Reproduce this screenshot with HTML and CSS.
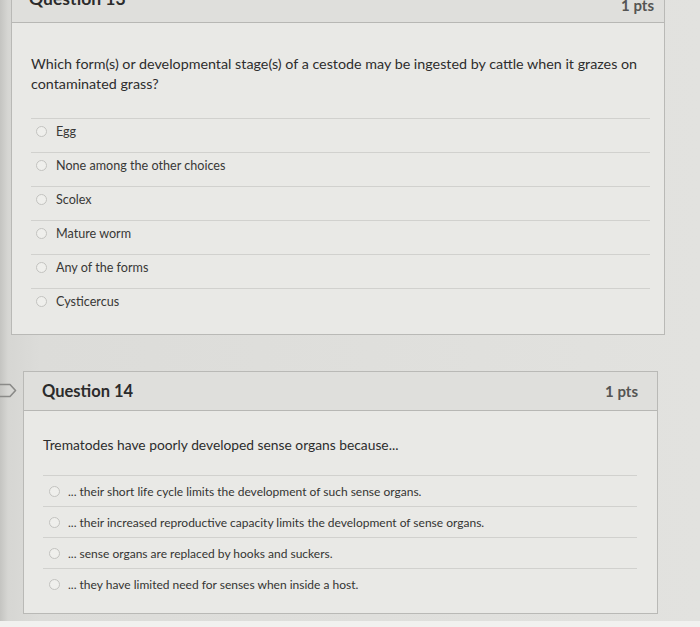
FILE: index.html
```html
<!DOCTYPE html>
<html lang="en">
<head>
<meta charset="utf-8">
<title>Quiz</title>
<link rel="stylesheet" href="styles.css">
</head>
<body>
<div class="screen">
  <div class="glare"></div>
  <svg class="cursor" width="10" height="14" viewBox="0 0 10 14"><path d="M1 1 L1 11 L3.6 8.6 L5.6 13 L7.2 12.3 L5.2 8 L8.6 8 Z" fill="#1a1a1a" stroke="#555" stroke-width="0.5"/></svg>
  <section class="q q13">
    <header class="q-head">
      <h2 class="q-name">Question 13</h2>
      <span class="pts">1 pts</span>
    </header>
    <div class="q-body">
      <p class="q-text">Which form(s) or developmental stage(s) of a cestode may be ingested by cattle when it grazes on contaminated grass?</p>
      <ul class="answers">
        <li><span class="radio"></span>Egg</li>
        <li><span class="radio"></span>None among the other choices</li>
        <li><span class="radio"></span>Scolex</li>
        <li><span class="radio"></span>Mature worm</li>
        <li><span class="radio"></span>Any of the forms</li>
        <li><span class="radio"></span>Cysticercus</li>
      </ul>
    </div>
  </section>
  <section class="q q14">
    <svg class="flag" width="18" height="16" viewBox="0 0 18 16"><path d="M-2 1.5 H10 L15.5 7.5 L10 13.5 H-2" fill="none" stroke="#8a8a88" stroke-width="1.6" stroke-linejoin="round"/></svg>
    <header class="q-head">
      <h2 class="q-name">Question 14</h2>
      <span class="pts">1 pts</span>
    </header>
    <div class="q-body">
      <p class="q-text">Trematodes have poorly developed sense organs because...</p>
      <ul class="answers">
        <li><span class="radio"></span>... their short life cycle limits the development of such sense organs.</li>
        <li><span class="radio"></span>... their increased reproductive capacity limits the development of sense organs.</li>
        <li><span class="radio"></span>... sense organs are replaced by hooks and suckers.</li>
        <li><span class="radio"></span>... they have limited need for senses when inside a host.</li>
      </ul>
    </div>
  </section>
  <div class="bottom-strip"></div>
</div>
</body>
</html>
```
FILE: styles.css
```css
* { box-sizing: border-box; }
html, body { margin: 0; padding: 0; }
body {
  background: #dadad7;
  font-family: Lato, "Open Sans", "Liberation Sans", sans-serif;
  color: #2f2f2f;
}
.screen {
  position: relative;
  width: 700px;
  height: 627px;
  overflow: hidden;
  background: linear-gradient(to right, #c4c4c1 0, #d6d6d3 8px, #dcdcd9 40px, #e2e2df 100%);
}
.glare {
  position: absolute;
  left: 140px;
  top: -10px;
  width: 185px;
  height: 15px;
  background: #6a6a68;
  filter: blur(5px);
  opacity: 0.55;
  border-radius: 50%;
}
.cursor {
  position: absolute;
  left: 303px;
  top: 190px;
}
.q {
  position: relative;
  border: 1px solid #b9b9b6;
  background: #e9e9e6;
}
.q13 {
  margin: -17px 0 0 11px;
  width: 654px;
}
.q14 {
  margin: 36px 0 0 23px;
  width: 635px;
}
.q-head {
  height: 39px;
  display: flex;
  justify-content: space-between;
  align-items: center;
  padding: 0 19px 0 18px;
  background: #dfdfdc;
  border-bottom: 1px solid #b7b7b4;
}
.q13 .q-head {
  padding: 0 10px 2px 17px;
}
.q13 .q-name {
  margin-bottom: 7px;
  font-size: 17.5px;
}
.q13 .pts {
  margin-top: 6px;
}
.q-name {
  margin: 0;
  font-size: 16.5px;
  font-weight: 700;
  color: #2b2b2b;
}
.pts {
  font-size: 15px;
  font-weight: 700;
  color: #555553;
}
.q-body {
  padding: 31px 14px 12px 19px;
}
.q14 .q-body {
  padding: 24px 20px 14px 19px;
}
.q-text {
  margin: 0 0 25px;
  font-size: 14.3px;
  line-height: 19.5px;
  color: #2d2d2d;
}
.q14 .q-text {
  font-size: 13.8px;
  line-height: 20px;
  margin-bottom: 20px;
}
.answers {
  list-style: none;
  margin: 0;
  padding: 0;
}
.answers li {
  height: 34px;
  display: flex;
  align-items: center;
  padding: 0 0 8px 5px;
  border-top: 1px solid #d1d1ce;
  font-size: 12.6px;
  color: #383836;
}
.q14 .answers li {
  height: 31px;
  padding: 0 0 0 6px;
  font-size: 12px;
  color: #343432;
}
.radio {
  width: 11px;
  height: 11px;
  border-radius: 50%;
  border: 1px solid #c3c3c0;
  background: #efefec;
  margin-right: 9px;
  flex: none;
}
.q14 .radio {
  margin-right: 8px;
}
.flag {
  position: absolute;
  left: -24px;
  top: 11px;
}
.bottom-strip {
  margin-top: 7px;
  height: 12px;
  background: #f1f1ef;
}
```
